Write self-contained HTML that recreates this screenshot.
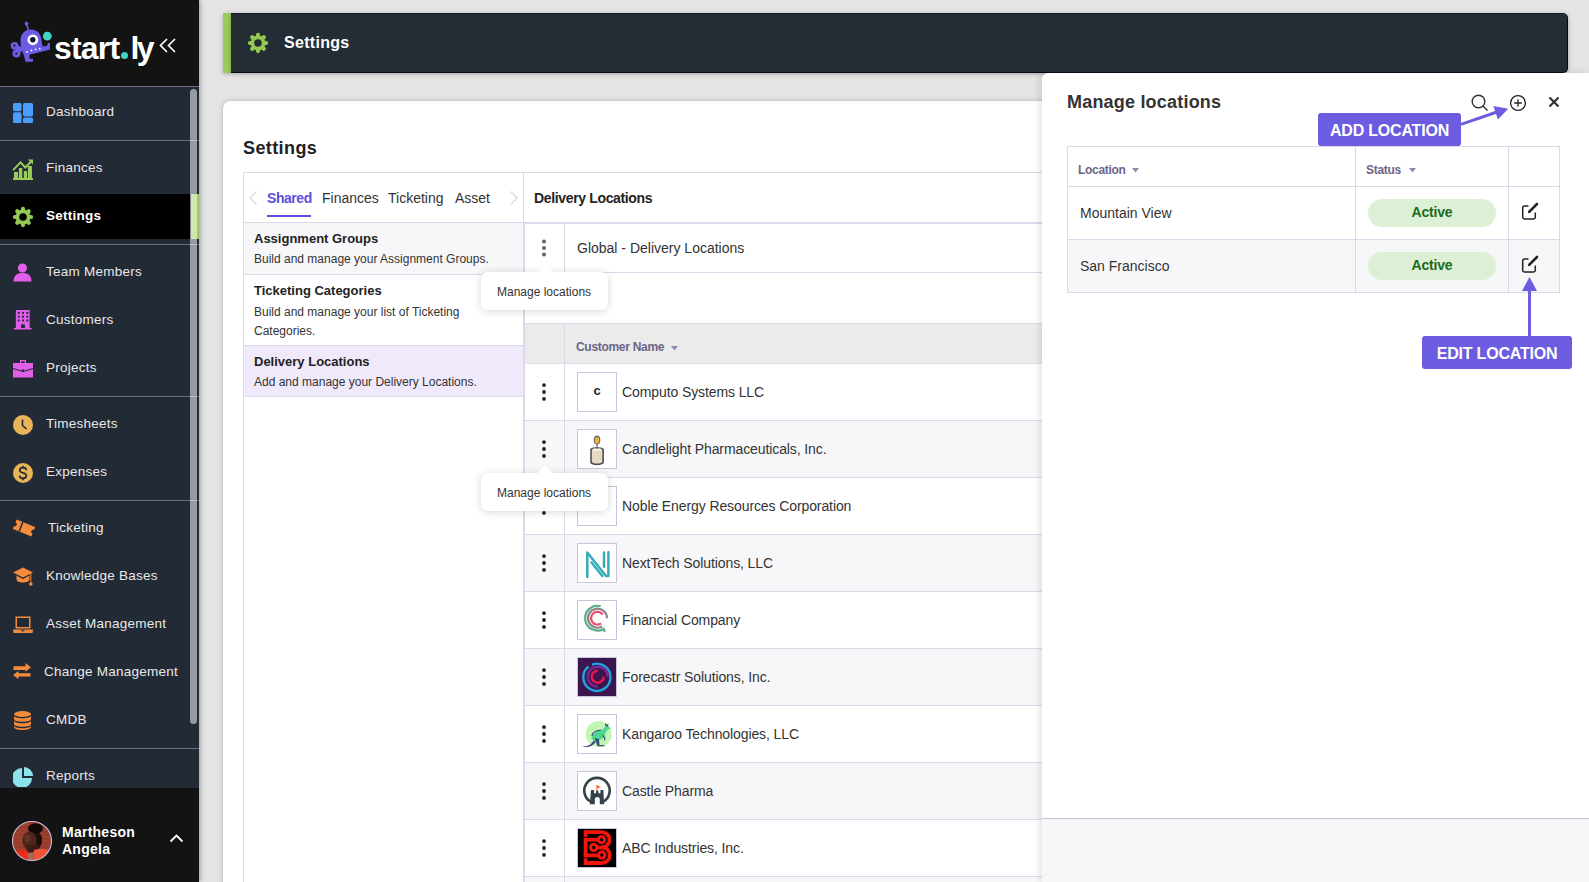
<!DOCTYPE html>
<html><head><meta charset="utf-8">
<style>
*{box-sizing:border-box;margin:0;padding:0}
html,body{width:1589px;height:882px;overflow:hidden;background:#e4e4e4;font-family:"Liberation Sans",sans-serif;color:#222}
.abs{position:absolute}
#sb{position:absolute;left:0;top:0;width:199px;height:882px;background:#222a36;box-shadow:1px 0 5px rgba(0,0,0,.35);z-index:5}
#sbtop{position:absolute;left:0;top:0;width:199px;height:86px;background:#131313}
.hl{position:absolute;left:0;width:199px;height:1px;background:#6f6a86}
.nav{position:absolute;left:46px;color:#e8e8ea;font-size:13.5px;letter-spacing:0.25px;white-space:nowrap}
.ic{position:absolute;left:13px;width:20px;height:20px}
#hgr{position:absolute;left:223px;top:13px;width:8px;height:60px;background:#9ccb5c;box-shadow:0 1px 4px rgba(0,0,0,.25)}
#hdr{position:absolute;left:231px;top:13px;width:1337px;height:60px;background:#232d33;border-bottom:1px solid #070a1a;border-top:1px solid #1a2030;border-right:1px solid #070a1a;border-radius:0 5px 5px 0;box-shadow:0 1px 4px rgba(0,0,0,.3)}
#card{position:absolute;left:223px;top:101px;width:1345px;height:800px;background:#fff;border-radius:8px;box-shadow:0 0 5px rgba(0,0,0,.22)}
.t{position:absolute;white-space:nowrap}
</style></head><body>

<!-- SIDEBAR -->
<div id="sb">
  <div id="sbtop"></div>
  <!-- logo -->
  <svg class="abs" style="left:8px;top:18px" width="50" height="48" viewBox="0 0 50 48">
    <path d="M18.5 6 L20.4 12" stroke="#6b5ce7" stroke-width="1.6"/>
    <circle cx="18.5" cy="5.7" r="1.9" fill="#6b5ce7"/>
    <circle cx="6.6" cy="27.8" r="3.9" fill="#6b5ce7"/><circle cx="8.5" cy="35.4" r="4" fill="#6b5ce7"/>
    <path d="M7 26 L14 29.5 L14 33 L9 37 Z" fill="#6b5ce7"/>
    <circle cx="6.4" cy="27.6" r="1.1" fill="#131313"/><circle cx="8.3" cy="35.6" r="1.1" fill="#131313"/>
    <path d="M12.5 23 C12.5 15.5 17 11.4 23 11.4 C29 11.4 33 15.5 33.5 22 L34.5 28.5 L39 27.8 L40 25 L42 25 L42 31.6 L21.5 36.8 L21.5 40.8 L25 40.8 L25 43.8 L17.5 43.8 L16 37.5 C14 34 12.5 29 12.5 23 Z" fill="#6b5ce7"/>
    <circle cx="24.8" cy="21.8" r="5.4" fill="#fff"/><circle cx="24.8" cy="21.8" r="2.7" fill="#0d1330"/>
    <circle cx="19" cy="34" r="0.9" fill="#fff"/><circle cx="23.5" cy="32.5" r="0.9" fill="#fff"/><circle cx="27.6" cy="31.4" r="0.9" fill="#fff"/><circle cx="31.7" cy="30.7" r="0.9" fill="#fff"/>
    <circle cx="39.3" cy="18.2" r="4.35" fill="#3dd6c4"/>
  </svg>
  <div class="t" style="left:54px;top:30px;font-size:32px;font-weight:bold;color:#fff;letter-spacing:-0.8px;line-height:36px">start<span style="display:inline-block;width:7px;height:7px;border-radius:50%;background:#3dd6c4;margin:0 2px 0 2px"></span><span style="letter-spacing:-2.6px">l</span>y</div>
  <svg class="abs" style="left:159px;top:38px" width="18" height="16" viewBox="0 0 18 16">
    <path d="M8 1 L1.5 7.5 L8 14 M16 1 L9.5 7.5 L16 14" fill="none" stroke="#fff" stroke-width="1.7"/>
  </svg>

  <div class="hl" style="top:86px"></div>
  <div class="hl" style="top:140px"></div>
  <div class="abs" style="left:0;top:194px;width:199px;height:45px;background:#000"></div>
  <div class="hl" style="top:244px"></div>
  <div class="hl" style="top:396px"></div>
  <div class="hl" style="top:500px"></div>
  <div class="hl" style="top:748px"></div>

  <!-- icons -->
  <svg class="ic" style="top:103px" viewBox="0 0 20 20" fill="#4a9eff">
    <rect x="0" y="0" width="8.6" height="8.2" rx="1.6"/><rect x="0" y="9.2" width="8.6" height="10.8" rx="1.6"/>
    <rect x="10" y="0" width="10" height="13.4" rx="1.6"/><rect x="10" y="14.4" width="10" height="5.6" rx="1.6"/>
  </svg>
  <svg class="abs" style="left:10px;top:155px" width="26" height="29" viewBox="0 0 26 29" fill="#9bcb58">
    <path d="M3.1 15.1 L10.5 7.4 L15.3 12.5 L21.5 6.3" fill="none" stroke="#9bcb58" stroke-width="2"/>
    <path d="M17.8 4.4 H23 V9.6 Z"/>
    <rect x="3.9" y="16.9" width="4.1" height="7"/><rect x="8.9" y="13" width="3.4" height="11"/><rect x="13.8" y="16" width="3.3" height="8"/><rect x="17.9" y="11" width="4" height="13"/>
    <rect x="3" y="23" width="20" height="2"/>
  </svg>
  <svg class="abs" style="left:11px;top:205px" width="24" height="24" viewBox="0 0 24 24">
    <g stroke="#94c853" stroke-width="4.2" stroke-linecap="round"><path d="M12 3.9 V20.1 M3.9 12 H20.1 M6.27 6.27 L17.73 17.73 M17.73 6.27 L6.27 17.73"/></g>
    <circle cx="12" cy="12" r="7.4" fill="#94c853"/><circle cx="12" cy="12" r="3.8" fill="#000"/>
  </svg>
  <svg class="ic" style="top:263px" viewBox="0 0 20 20" fill="#e05ee8">
    <circle cx="9.5" cy="5" r="4.6"/><path d="M0.5 18.5 C0.5 12.5 4 10 9.5 10 C15 10 18.5 12.5 18.5 18.5 Z"/>
  </svg>
  <svg class="ic" style="top:310px" viewBox="0 0 20 21" fill="#e05ee8">
    <path d="M2.5 0 H17 V19 H19 V20.5 H0.5 V19 H2.5 Z"/>
    <g fill="#222a36"><rect x="4.5" y="2" width="2" height="2"/><rect x="9" y="2" width="2" height="2"/><rect x="13.5" y="2" width="2" height="2"/>
    <rect x="4.5" y="6" width="2" height="2"/><rect x="9" y="6" width="2" height="2"/><rect x="13.5" y="6" width="2" height="2"/>
    <rect x="4.5" y="10" width="2" height="2"/><rect x="9" y="10" width="2" height="2"/><rect x="13.5" y="10" width="2" height="2"/>
    <path d="M8 19 V16 C8 14.5 12 14.5 12 16 V19 Z"/></g>
  </svg>
  <svg class="ic" style="top:359px" viewBox="0 0 20 18" fill="#e05ee8">
    <path d="M7 0 H13 V3 H20 V17.5 H0 V3 H7 Z M8.3 1.3 V3 H11.7 V1.3 Z" fill-rule="evenodd"/>
    <path d="M0 8.5 L8 11 M12 11 L20 8.5" stroke="#222a36" stroke-width="1" fill="none"/>
    <rect x="8.5" y="9.5" width="3" height="2.5" fill="#222a36"/>
  </svg>
  <svg class="ic" style="top:415px" viewBox="0 0 20 20">
    <circle cx="10" cy="10" r="10" fill="#e9b558"/><path d="M9.5 4.5 V10.5 L13.5 14" fill="none" stroke="#222a36" stroke-width="1.6"/>
  </svg>
  <svg class="ic" style="top:463px" viewBox="0 0 20 20">
    <circle cx="10" cy="10" r="10" fill="#e9b558"/>
    <path d="M13.3 7.2 C13.3 5.5 11.8 4.6 10 4.6 C8 4.6 6.7 5.6 6.7 7.2 C6.7 9 8.5 9.5 10 9.9 C11.7 10.3 13.4 10.9 13.4 12.8 C13.4 14.5 11.9 15.4 10 15.4 C8 15.4 6.5 14.4 6.5 12.6 M10 2.8 V4.6 M10 15.4 V17.2" fill="none" stroke="#222a36" stroke-width="1.6"/>
  </svg>
  <svg class="ic" style="top:518px;left:13px;width:22px;height:20px" viewBox="0 0 22 20" fill="#f28b3c">
    <g transform="rotate(22 11 10)"><path d="M1 5 H21 V8 A2 2 0 0 0 21 12 V15 H1 V12 A2 2 0 0 0 1 8 Z"/><rect x="7" y="5" width="1.4" height="10" fill="#222a36"/></g>
  </svg>
  <svg class="ic" style="top:567px" viewBox="0 0 20 20" fill="#f28b3c">
    <path d="M10 0.5 L20 5.5 L10 10.5 L0 5.5 Z"/><path d="M3.5 8.5 V12 C3.5 14.5 6.5 15.5 10 15.5 C13.5 15.5 16.5 14.5 16.5 12 V8.5 L10 12 Z"/>
    <rect x="17.3" y="5.5" width="1" height="10"/><circle cx="17.8" cy="17" r="1.8"/>
  </svg>
  <svg class="ic" style="top:615px" viewBox="0 0 20 17" fill="#f28b3c">
    <path d="M2.5 0 H17.5 V12 H2.5 Z M4 1.5 V10.5 H16 V1.5 Z" fill-rule="evenodd"/><path d="M0 13 H20 L19.5 16.5 H0.5 Z"/><rect x="8.5" y="13.6" width="3" height="1.2" fill="#222a36"/>
  </svg>
  <svg class="ic" style="top:663px;width:18px;height:16px" viewBox="0 0 18 16" fill="#f28b3c">
    <path d="M0.5 3.2 H12.5 V0 L18 4.35 L12.5 8.7 V7 H0.5 Z"/><path d="M17.5 10.3 H5.5 V7.9 L0 12.05 L5.5 16.2 V13.5 H17.5 Z"/>
  </svg>
  <svg class="ic" style="top:711px;left:14px;width:17px;height:19px" viewBox="0 0 17 19" fill="#f28b3c">
    <ellipse cx="8.5" cy="3" rx="8.5" ry="3"/>
    <path d="M0 4.5 C0 6.2 3.8 7.3 8.5 7.3 C13.2 7.3 17 6.2 17 4.5 V8 C17 9.7 13.2 10.8 8.5 10.8 C3.8 10.8 0 9.7 0 8 Z"/>
    <path d="M0 9.5 C0 11.2 3.8 12.3 8.5 12.3 C13.2 12.3 17 11.2 17 9.5 V13 C17 14.7 13.2 15.8 8.5 15.8 C3.8 15.8 0 14.7 0 13 Z"/>
    <path d="M0 14.5 C0 16.2 3.8 17.3 8.5 17.3 C13.2 17.3 17 16.2 17 14.5 V16 C17 17.7 13.2 19 8.5 19 C3.8 19 0 17.7 0 16 Z"/>
  </svg>
  <svg class="ic" style="top:767px" viewBox="0 0 20 20" fill="#8de3ec">
    <path d="M9 1 V11 H19 A10 10 0 1 1 9 1 Z"/><path d="M11 0 A9 9 0 0 1 20 9 H11 Z"/>
  </svg>

  <div class="nav" style="top:104px">Dashboard</div>
  <div class="nav" style="top:160px">Finances</div>
  <div class="nav" style="top:208px;font-weight:bold;color:#fff">Settings</div>
  <div class="nav" style="top:264px">Team Members</div>
  <div class="nav" style="top:312px">Customers</div>
  <div class="nav" style="top:360px">Projects</div>
  <div class="nav" style="top:416px">Timesheets</div>
  <div class="nav" style="top:464px">Expenses</div>
  <div class="nav" style="top:520px;left:48px">Ticketing</div>
  <div class="nav" style="top:568px">Knowledge Bases</div>
  <div class="nav" style="top:616px">Asset Management</div>
  <div class="nav" style="top:664px;left:44px">Change Management</div>
  <div class="nav" style="top:712px">CMDB</div>
  <div class="nav" style="top:768px">Reports</div>

  <div class="abs" style="left:0;top:788px;width:199px;height:94px;background:#131313"></div>

  <!-- scrollbar -->
  <div class="abs" style="left:191px;top:194px;width:8px;height:45px;background:#9ccc5a"></div>
  <div class="abs" style="left:190px;top:89px;width:7px;height:635px;background:rgba(255,255,255,.53);border-radius:4px"></div>

  <!-- user -->
  <svg class="abs" style="left:12px;top:821px" width="40" height="40" viewBox="0 0 40 40">
    <defs><clipPath id="av"><circle cx="20" cy="20" r="19.5"/></clipPath></defs>
    <g clip-path="url(#av)">
      <rect width="40" height="40" fill="#973b2b"/>
      <g stroke="#ab4a37" stroke-width="0.7"><path d="M0 4 H40 M0 8 H40 M0 12 H40 M0 16 H40 M0 20 H40 M0 24 H40 M0 28 H40"/></g>
      <path d="M17 11 C22 9 29 11 30 17 C30.5 23 28 27 24 29 L16 28 Z" fill="#1c0d0a"/>
      <ellipse cx="23.5" cy="7.5" rx="7.5" ry="5.2" fill="#130908"/>
      <ellipse cx="17.5" cy="19.5" rx="7.2" ry="9" fill="#4d261b"/>
      <ellipse cx="15.5" cy="17.5" rx="3" ry="4" fill="#6e3a2a" opacity=".7"/>
      <path d="M14 25 L26 23 L27 34 L15 34 Z" fill="#3a1a12"/>
      <path d="M1 31 C6 29 12 29 16 30 L17 40 H0 Z" fill="#ee2a18"/>
      <path d="M22 29 C28 27 34 28 40 30 V40 H21 Z" fill="#ee5535"/>
      <path d="M15.5 32 L22 31 L20.5 40 L16.5 40 Z" fill="#a56a5a"/>
    </g>
    <circle cx="20" cy="20" r="19.5" fill="none" stroke="#c3bdd8" stroke-width="1.1"/>
  </svg>
  <div class="t" style="left:62px;top:824px;color:#fff;font-weight:bold;font-size:14px;line-height:17px;letter-spacing:0.25px">Martheson<br>Angela</div>
  <svg class="abs" style="left:169px;top:833px" width="15" height="10" viewBox="0 0 15 10">
    <path d="M1.5 8.5 L7.5 2.5 L13.5 8.5" fill="none" stroke="#fff" stroke-width="1.8"/>
  </svg>
</div>

<!-- HEADER -->
<div id="hgr"></div>
<div id="hdr">
  <svg class="abs" style="left:15px;top:17px" width="24" height="24" viewBox="0 0 24 24">
    <g stroke="#94c853" stroke-width="4.2" stroke-linecap="round"><path d="M12 3.9 V20.1 M3.9 12 H20.1 M6.27 6.27 L17.73 17.73 M17.73 6.27 L6.27 17.73"/></g>
    <circle cx="12" cy="12" r="7.4" fill="#94c853"/><circle cx="12" cy="12" r="3.8" fill="#232c33"/>
  </svg>
  <div class="t" style="left:53px;top:20px;color:#fff;font-weight:bold;font-size:16px;letter-spacing:0.3px">Settings</div>
</div>

<!-- CARD -->
<div id="card">
  <div class="t" style="left:20px;top:37px;font-size:18px;font-weight:bold;color:#222;letter-spacing:0.4px">Settings</div>
</div>

<!-- LEFT LIST PANEL -->
<div class="abs" style="left:243px;top:172px;width:281px;height:720px;border:1px solid #dcd9ea;border-bottom:none"></div>
<div class="abs" style="left:244px;top:222px;width:279px;height:1px;background:#dcd9ea"></div>
<svg class="abs" style="left:248px;top:190px" width="10" height="16" viewBox="0 0 10 16"><path d="M8.5 1.5 L2 8 L8.5 14.5" fill="none" stroke="#dcd9ec" stroke-width="1.4"/></svg>
<svg class="abs" style="left:509px;top:190px" width="10" height="16" viewBox="0 0 10 16"><path d="M1.5 1.5 L8 8 L1.5 14.5" fill="none" stroke="#dcd9ec" stroke-width="1.4"/></svg>
<div class="t" style="left:267px;top:190px;font-size:14px;font-weight:bold;color:#5b50dc;letter-spacing:-0.45px">Shared</div>
<div class="abs" style="left:267px;top:215px;width:44px;height:2px;background:#5b4fe0"></div>
<div class="t" style="left:322px;top:190px;font-size:14px;color:#333">Finances</div>
<div class="t" style="left:388px;top:190px;font-size:14px;color:#333">Ticketing</div>
<div class="t" style="left:455px;top:190px;font-size:14px;color:#333">Asset</div>

<div class="abs" style="left:244px;top:223px;width:279px;height:52px;background:#f7f7fa;border-bottom:1px solid #dcd9ea"></div>
<div class="t" style="left:254px;top:231px;font-size:13px;font-weight:bold;color:#222">Assignment Groups</div>
<div class="t" style="left:254px;top:252px;font-size:12px;color:#333">Build and manage your Assignment Groups.</div>

<div class="abs" style="left:244px;top:275px;width:279px;height:71px;background:#fff;border-bottom:1px solid #dcd9ea"></div>
<div class="t" style="left:254px;top:283px;font-size:13px;font-weight:bold;color:#222">Ticketing Categories</div>
<div class="t" style="left:254px;top:303px;font-size:12px;color:#333;line-height:19px">Build and manage your list of Ticketing<br>Categories.</div>

<div class="abs" style="left:244px;top:346px;width:279px;height:51px;background:#f0e9fb;border-bottom:1px solid #dcd9ea"></div>
<div class="t" style="left:254px;top:354px;font-size:13px;font-weight:bold;color:#222">Delivery Locations</div>
<div class="t" style="left:254px;top:375px;font-size:12px;color:#333">Add and manage your Delivery Locations.</div>

<!-- RIGHT CONTENT -->
<div class="abs" style="left:524px;top:172px;width:530px;height:1px;background:#dcd9ea"></div>
<div class="t" style="left:534px;top:190px;font-size:14px;font-weight:bold;color:#222;letter-spacing:-0.35px">Delivery Locations</div>
<div class="abs" style="left:524px;top:222px;width:530px;height:2px;background:#dcd9ea"></div>

<!-- global row -->
<div class="abs" style="left:564px;top:223px;width:1px;height:49px;background:#dcd9ea"></div>
<div class="abs" style="left:524px;top:272px;width:530px;height:1px;background:#dcd9ea"></div>
<div class="t" style="left:577px;top:240px;font-size:14px;color:#333">Global - Delivery Locations</div>

<!-- table -->
<div id="tbl">
<div class="abs" style="left:525px;top:323px;width:530px;height:41px;background:#ebebeb;border-bottom:1px solid #e0ddec;border-top:1px solid #dcd9ea"></div>
<div class="abs" style="left:564px;top:323px;width:1px;height:600px;background:#dcd9ea"></div>
<div class="abs" style="left:523px;top:222px;width:2px;height:700px;background:#dcd9ea"></div>
<div class="t" style="left:576px;top:340px;font-size:12px;font-weight:bold;color:#6b6589;letter-spacing:-0.3px">Customer Name</div>
<svg class="abs" style="left:671px;top:346px" width="7" height="5" viewBox="0 0 7 5"><path d="M0 0 H7 L3.5 4.5 Z" fill="#8e8aab"/></svg>
<div class="abs" style="left:525px;top:364px;width:529px;height:57px;background:#fff;border-bottom:1px solid #dcd9ea"></div>
<div class="abs" style="left:564px;top:363px;width:1px;height:57px;background:#dcd9ea"></div>
<svg class="abs" style="left:541px;top:383px" width="6" height="18" viewBox="0 0 6 18" fill="#222"><circle cx="3" cy="2.1" r="1.9"/><circle cx="3" cy="9" r="1.9"/><circle cx="3" cy="15.9" r="1.9"/></svg>
<div class="abs" style="left:577px;top:372px;width:40px;height:40px;border:1px solid #c9c5dd;background:#fff"><div class="t" style="left:0;top:-1px;width:38px;text-align:center;line-height:38px;font-size:13px;font-weight:bold;color:#222">c</div></div>
<div class="t" style="left:622px;top:384px;font-size:14px;color:#333;letter-spacing:-0.1px">Computo Systems LLC</div>
<div class="abs" style="left:525px;top:421px;width:529px;height:57px;background:#f7f7fa;border-bottom:1px solid #dcd9ea"></div>
<div class="abs" style="left:564px;top:420px;width:1px;height:57px;background:#dcd9ea"></div>
<svg class="abs" style="left:541px;top:440px" width="6" height="18" viewBox="0 0 6 18" fill="#222"><circle cx="3" cy="2.1" r="1.9"/><circle cx="3" cy="9" r="1.9"/><circle cx="3" cy="15.9" r="1.9"/></svg>
<div class="abs" style="left:577px;top:429px;width:40px;height:40px;border:1px solid #c9c5dd;background:#fff"><svg class="abs" style="left:0;top:0" width="38" height="38" viewBox="0 0 38 38">
<ellipse cx="19" cy="10" rx="3.3" ry="4.5" fill="#6a6a6a"/><ellipse cx="19" cy="10.4" rx="2.2" ry="3.3" fill="#e8b53a"/>
<path d="M12.2 19.5 C12.2 16.5 25.9 16.5 25.9 19.5 V32 C25.9 36.2 12.2 36.2 12.2 32 Z" fill="#4a4f4f"/>
<path d="M13.8 20 C13.8 18.3 24.3 18.3 24.3 20 V31.5 C24.3 34.3 13.8 34.3 13.8 31.5 Z" fill="#e6dac4"/>
<ellipse cx="19" cy="19.6" rx="4.6" ry="1.4" fill="#f5f0e6"/><rect x="18.6" y="14" width="0.9" height="5" fill="#444"/>
</svg></div>
<div class="t" style="left:622px;top:441px;font-size:14px;color:#333;letter-spacing:-0.1px">Candlelight Pharmaceuticals, Inc.</div>
<div class="abs" style="left:525px;top:478px;width:529px;height:57px;background:#fff;border-bottom:1px solid #dcd9ea"></div>
<div class="abs" style="left:564px;top:477px;width:1px;height:57px;background:#dcd9ea"></div>
<svg class="abs" style="left:541px;top:497px" width="6" height="18" viewBox="0 0 6 18" fill="#222"><circle cx="3" cy="2.1" r="1.9"/><circle cx="3" cy="9" r="1.9"/><circle cx="3" cy="15.9" r="1.9"/></svg>
<div class="abs" style="left:577px;top:486px;width:40px;height:40px;border:1px solid #c9c5dd;background:#fff"></div>
<div class="t" style="left:622px;top:498px;font-size:14px;color:#333;letter-spacing:-0.1px">Noble Energy Resources Corporation</div>
<div class="abs" style="left:525px;top:535px;width:529px;height:57px;background:#f7f7fa;border-bottom:1px solid #dcd9ea"></div>
<div class="abs" style="left:564px;top:534px;width:1px;height:57px;background:#dcd9ea"></div>
<svg class="abs" style="left:541px;top:554px" width="6" height="18" viewBox="0 0 6 18" fill="#222"><circle cx="3" cy="2.1" r="1.9"/><circle cx="3" cy="9" r="1.9"/><circle cx="3" cy="15.9" r="1.9"/></svg>
<div class="abs" style="left:577px;top:543px;width:40px;height:40px;border:1px solid #c9c5dd;background:#fff"><svg class="abs" style="left:0;top:0" width="38" height="38" viewBox="0 0 38 38" fill="none" stroke="#35adb9" stroke-width="2.5" stroke-linecap="round" stroke-linejoin="round">
<path d="M9.3 33 V8.5 L28 32 H30.4 V8.2"/><path d="M13.5 18.5 L24.3 32"/><path d="M26 8.5 V22.8"/>
</svg></div>
<div class="t" style="left:622px;top:555px;font-size:14px;color:#333;letter-spacing:-0.1px">NextTech Solutions, LLC</div>
<div class="abs" style="left:525px;top:592px;width:529px;height:57px;background:#fff;border-bottom:1px solid #dcd9ea"></div>
<div class="abs" style="left:564px;top:591px;width:1px;height:57px;background:#dcd9ea"></div>
<svg class="abs" style="left:541px;top:611px" width="6" height="18" viewBox="0 0 6 18" fill="#222"><circle cx="3" cy="2.1" r="1.9"/><circle cx="3" cy="9" r="1.9"/><circle cx="3" cy="15.9" r="1.9"/></svg>
<div class="abs" style="left:577px;top:600px;width:40px;height:40px;border:1px solid #c9c5dd;background:#fff"><svg class="abs" style="left:0;top:0" width="38" height="38" viewBox="0 0 38 38" fill="none" stroke-width="2.2">
<path d="M22.71 5.22 A12.4 12.4 0 1 0 25.70 27.94 L26.8 31" stroke="#5aad8a"/>
<path d="M29.00 17.20 A9.5 9.5 0 1 0 24.25 25.43" stroke="#8a8686"/>
<path d="M24.74 13.53 A6.4 6.4 0 1 0 23.17 22.44" stroke="#ec4d6d"/>
</svg></div>
<div class="t" style="left:622px;top:612px;font-size:14px;color:#333;letter-spacing:-0.1px">Financial Company</div>
<div class="abs" style="left:525px;top:649px;width:529px;height:57px;background:#f7f7fa;border-bottom:1px solid #dcd9ea"></div>
<div class="abs" style="left:564px;top:648px;width:1px;height:57px;background:#dcd9ea"></div>
<svg class="abs" style="left:541px;top:668px" width="6" height="18" viewBox="0 0 6 18" fill="#222"><circle cx="3" cy="2.1" r="1.9"/><circle cx="3" cy="9" r="1.9"/><circle cx="3" cy="15.9" r="1.9"/></svg>
<div class="abs" style="left:577px;top:657px;width:40px;height:40px;border:1px solid #c9c5dd;background:#fff"><svg class="abs" style="left:0;top:0" width="38" height="38" viewBox="1 1 38 38" fill="none">
<rect width="40" height="40" fill="#3d154f"/>
<path d="M15 7.6 A13.6 13.6 0 1 1 11.6 9.5" stroke="#1ba6de" stroke-width="2.4"/>
<path d="M20.7 29.7 A10 10 0 1 1 30.7 19.7" stroke="#7b2690" stroke-width="2.4"/>
<path d="M26.7 19.7 A6 6 0 1 1 20.7 13.7" stroke="#e8194a" stroke-width="2.4"/>
</svg></div>
<div class="t" style="left:622px;top:669px;font-size:14px;color:#333;letter-spacing:-0.1px">Forecastr Solutions, Inc.</div>
<div class="abs" style="left:525px;top:706px;width:529px;height:57px;background:#fff;border-bottom:1px solid #dcd9ea"></div>
<div class="abs" style="left:564px;top:705px;width:1px;height:57px;background:#dcd9ea"></div>
<svg class="abs" style="left:541px;top:725px" width="6" height="18" viewBox="0 0 6 18" fill="#222"><circle cx="3" cy="2.1" r="1.9"/><circle cx="3" cy="9" r="1.9"/><circle cx="3" cy="15.9" r="1.9"/></svg>
<div class="abs" style="left:577px;top:714px;width:40px;height:40px;border:1px solid #c9c5dd;background:#fff"><svg class="abs" style="left:-1px;top:-1px" width="40" height="40" viewBox="0 0 40 40">
<circle cx="21.7" cy="20" r="13" fill="#c2f7b2"/>
<path d="M5 32.7 C10 32.5 14.5 31 16.5 26.5 L18.8 27.5 C16.5 32 11 34 5 32.7 Z" fill="#3c4e78"/>
<ellipse cx="21.5" cy="21.5" rx="7.5" ry="4.6" transform="rotate(-28 21.5 21.5)" fill="#4fd68f"/>
<path d="M15 22 C15 18 19 16.5 24 16" stroke="#3c4e78" stroke-width="1.2" fill="none"/>
<path d="M17.5 24 L20.5 32.2 H27.5 V31 H22.5 L22 25 Z" fill="#3c4e78"/>
<path d="M24 17 L28.5 12.5 L31 12 L34 15 L31 15.2 L28 19.5 Z" fill="#4fd68f"/>
<path d="M28.5 12.5 L28 8.8 L30 11 L31.5 9 L31 12.3 Z" fill="#3c4e78"/>
<path d="M26 21 L28.5 23.5 L28 26.5 L26.8 26 L27.2 23.8 L25 22 Z" fill="#3c4e78"/>
</svg></div>
<div class="t" style="left:622px;top:726px;font-size:14px;color:#333;letter-spacing:-0.1px">Kangaroo Technologies, LLC</div>
<div class="abs" style="left:525px;top:763px;width:529px;height:57px;background:#f7f7fa;border-bottom:1px solid #dcd9ea"></div>
<div class="abs" style="left:564px;top:762px;width:1px;height:57px;background:#dcd9ea"></div>
<svg class="abs" style="left:541px;top:782px" width="6" height="18" viewBox="0 0 6 18" fill="#222"><circle cx="3" cy="2.1" r="1.9"/><circle cx="3" cy="9" r="1.9"/><circle cx="3" cy="15.9" r="1.9"/></svg>
<div class="abs" style="left:577px;top:771px;width:40px;height:40px;border:1px solid #c9c5dd;background:#fff"><svg class="abs" style="left:-1px;top:-1px" width="40" height="40" viewBox="0 0 40 40">
<path d="M13.5 30.5 A12.7 12.7 0 1 1 26.5 30.5" fill="none" stroke="#34434a" stroke-width="2.6"/>
<path d="M12.8 33.3 L14 19 H17.1 V22.3 H19 V19.5 H21.4 V22.3 H23.5 V19 H26.4 L27.1 33.3 H22.8 V28.5 A2.5 2.5 0 0 0 17.8 28.5 V33.3 Z" fill="#34434a"/>
<rect x="19.4" y="14" width="0.9" height="6" fill="#f26b2d"/><path d="M19.8 14.2 L23.8 15.8 L19.8 18 Z" fill="#f26b2d"/>
</svg></div>
<div class="t" style="left:622px;top:783px;font-size:14px;color:#333;letter-spacing:-0.1px">Castle Pharma</div>
<div class="abs" style="left:525px;top:820px;width:529px;height:57px;background:#fff;border-bottom:1px solid #dcd9ea"></div>
<div class="abs" style="left:564px;top:819px;width:1px;height:57px;background:#dcd9ea"></div>
<svg class="abs" style="left:541px;top:839px" width="6" height="18" viewBox="0 0 6 18" fill="#222"><circle cx="3" cy="2.1" r="1.9"/><circle cx="3" cy="9" r="1.9"/><circle cx="3" cy="15.9" r="1.9"/></svg>
<div class="abs" style="left:577px;top:828px;width:40px;height:40px;border:1px solid #c9c5dd;background:#fff"><svg class="abs" style="left:0;top:0" width="38" height="38" viewBox="1 1 38 38" fill="none">
<rect width="40" height="40" fill="#000"/>
<g stroke="#f5140c">
<path d="M8.6 8.8 V4.2 H25 A7.55 7.55 0 0 1 25 19.3 A7.85 7.85 0 0 1 25 35 H8.6 V30.3" stroke-width="3.8"/>
<circle cx="24.5" cy="11.7" r="3.2" stroke-width="3.1"/><circle cx="16.7" cy="19.5" r="3.2" stroke-width="3.1"/><circle cx="24.8" cy="27.1" r="3.2" stroke-width="3.1"/>
</g>
<g fill="#f5140c"><rect x="6.7" y="9.8" width="3.8" height="19.5"/><rect x="6.7" y="9.8" width="14" height="3.8"/><rect x="6.7" y="25.5" width="14.5" height="3.8"/><rect x="19.5" y="17.6" width="11" height="3.8"/></g>
</svg></div>
<div class="t" style="left:622px;top:840px;font-size:14px;color:#333;letter-spacing:-0.1px">ABC Industries, Inc.</div>
<div class="abs" style="left:525px;top:877px;width:529px;height:57px;background:#f7f7fa;border-bottom:1px solid #dcd9ea"></div>
<div class="abs" style="left:564px;top:876px;width:1px;height:57px;background:#dcd9ea"></div>
<svg class="abs" style="left:541px;top:896px" width="6" height="18" viewBox="0 0 6 18" fill="#222"><circle cx="3" cy="2.1" r="1.9"/><circle cx="3" cy="9" r="1.9"/><circle cx="3" cy="15.9" r="1.9"/></svg>
</div><!--/tbl-->

<!-- KEBAB global -->
<svg class="abs" style="left:541px;top:239px" width="6" height="18" viewBox="0 0 6 18" fill="#666"><circle cx="3" cy="2.5" r="2"/><circle cx="3" cy="9" r="2"/><circle cx="3" cy="15.5" r="2"/></svg>

<!-- TOOLTIPS -->
<div class="abs" style="left:481px;top:272px;width:127px;height:38px;background:#fff;border-radius:7px;box-shadow:0 1px 8px rgba(0,0,0,.16)">
  <div class="t" style="left:16px;top:13px;font-size:12px;color:#333">Manage locations</div>
</div>
<svg class="abs" style="left:535px;top:264px" width="20" height="9" viewBox="0 0 20 9"><path d="M1.5 9 L10 0.5 L18.5 9 Z" fill="#fff"/></svg>
<div class="abs" style="left:481px;top:473px;width:127px;height:38px;background:#fff;border-radius:7px;box-shadow:0 1px 8px rgba(0,0,0,.16)">
  <div class="t" style="left:16px;top:13px;font-size:12px;color:#333">Manage locations</div>
</div>
<svg class="abs" style="left:535px;top:465px" width="20" height="9" viewBox="0 0 20 9"><path d="M1.5 9 L10 0.5 L18.5 9 Z" fill="#fff"/></svg>

<!-- PANEL -->
<div id="panel" class="abs" style="left:1042px;top:73px;width:547px;height:809px;background:#fff;border-top-left-radius:6px;box-shadow:-2px 0 9px rgba(0,0,0,.12)">
  <div class="t" style="left:25px;top:19px;font-size:18px;font-weight:bold;color:#333;letter-spacing:0.2px">Manage locations</div>
  <!-- search -->
  <svg class="abs" style="left:429px;top:21px" width="18" height="18" viewBox="0 0 18 18" fill="none" stroke="#333" stroke-width="1.4">
    <circle cx="7.5" cy="7.5" r="6.3"/><path d="M12 12 L16.5 16.5"/>
  </svg>
  <!-- plus -->
  <svg class="abs" style="left:467px;top:21px" width="18" height="18" viewBox="0 0 18 18" fill="none" stroke="#222" stroke-width="1.4">
    <circle cx="9" cy="9" r="7.4" stroke-width="1.3"/><path d="M9 5.2 V12.8 M5.2 9 H12.8" stroke-width="1.3"/>
  </svg>
  <!-- close -->
  <svg class="abs" style="left:506px;top:23px" width="12" height="12" viewBox="0 0 12 12" fill="none" stroke="#333" stroke-width="2.2">
    <path d="M1.5 1.5 L10.5 10.5 M10.5 1.5 L1.5 10.5"/>
  </svg>

  <!-- table -->
  <div class="abs" style="left:25px;top:73px;width:493px;height:147px;border:1px solid #dcd9ea"></div>
  <div class="abs" style="left:26px;top:113px;width:491px;height:53px;background:#fff;border-top:1px solid #dcd9ea"></div>
  <div class="abs" style="left:26px;top:166px;width:491px;height:53px;background:#f7f7fa;border-top:1px solid #dcd9ea"></div>
  <div class="abs" style="left:313px;top:74px;width:1px;height:145px;background:#dcd9ea"></div>
  <div class="abs" style="left:466px;top:74px;width:1px;height:145px;background:#dcd9ea"></div>
  <div class="t" style="left:36px;top:90px;font-size:12px;font-weight:bold;color:#6b6589;letter-spacing:-0.3px">Location</div>
  <svg class="abs" style="left:90px;top:95px" width="7" height="5" viewBox="0 0 7 5"><path d="M0 0 H7 L3.5 4.5 Z" fill="#8e8aab"/></svg>
  <div class="t" style="left:324px;top:90px;font-size:12px;font-weight:bold;color:#6b6589;letter-spacing:-0.3px">Status</div>
  <svg class="abs" style="left:367px;top:95px" width="7" height="5" viewBox="0 0 7 5"><path d="M0 0 H7 L3.5 4.5 Z" fill="#8e8aab"/></svg>

  <div class="t" style="left:38px;top:132px;font-size:14px;color:#333">Mountain View</div>
  <div class="t" style="left:38px;top:185px;font-size:14px;color:#333">San Francisco</div>
  <div class="abs" style="left:326px;top:126px;width:128px;height:28px;border-radius:14px;background:#dcf0d6;color:#1c6b1c;font-weight:bold;font-size:14px;text-align:center;line-height:26px;letter-spacing:-0.2px">Active</div>
  <div class="abs" style="left:326px;top:179px;width:128px;height:28px;border-radius:14px;background:#dcf0d6;color:#1c6b1c;font-weight:bold;font-size:14px;text-align:center;line-height:26px;letter-spacing:-0.2px">Active</div>
  <!-- edit icons -->
  <svg class="abs" style="left:479px;top:129px" width="20" height="20" viewBox="0 0 20 20" fill="none">
    <path d="M7.5 4.1 H3.4 A1.7 1.7 0 0 0 1.7 5.8 V15.2 A1.7 1.7 0 0 0 3.4 16.9 H12.6 A1.7 1.7 0 0 0 14.3 15.2 V10.5" stroke="#222" stroke-width="1.5"/>
    <path d="M8.6 9.4 L16 2" stroke="#222" stroke-width="2.6" stroke-linecap="round"/>
    <path d="M7 11.2 L7.6 8.4 L9.8 10.6 Z" fill="#222"/>
  </svg>
  <svg class="abs" style="left:479px;top:182px" width="20" height="20" viewBox="0 0 20 20" fill="none">
    <path d="M7.5 4.1 H3.4 A1.7 1.7 0 0 0 1.7 5.8 V15.2 A1.7 1.7 0 0 0 3.4 16.9 H12.6 A1.7 1.7 0 0 0 14.3 15.2 V10.5" stroke="#222" stroke-width="1.5"/>
    <path d="M8.6 9.4 L16 2" stroke="#222" stroke-width="2.6" stroke-linecap="round"/>
    <path d="M7 11.2 L7.6 8.4 L9.8 10.6 Z" fill="#222"/>
  </svg>

  <!-- footer -->
  <div class="abs" style="left:0;top:745px;width:547px;height:64px;background:#f7f7fa;border-top:1px solid #c5c2d9"></div>
</div>

<!-- ANNOTATIONS -->
<div class="abs" style="left:1318px;top:113px;width:143px;height:33px;background:#6c5ce0;border-radius:3px;color:#fff;font-weight:bold;font-size:16px;line-height:35px;text-align:center;letter-spacing:-0.2px">ADD LOCATION</div>
<svg class="abs" style="left:1455px;top:98px" width="60" height="32" viewBox="0 0 60 32">
  <path d="M6 26.3 L42 14" stroke="#6c5ce0" stroke-width="3"/>
  <path d="M53.2 10.8 L38.4 8.1 L42.9 21.4 Z" fill="#6c5ce0"/>
</svg>
<div class="abs" style="left:1422px;top:336px;width:150px;height:33px;background:#6c5ce0;border-radius:3px;color:#fff;font-weight:bold;font-size:16px;line-height:35px;text-align:center;letter-spacing:-0.2px">EDIT LOCATION</div>
<div class="abs" style="left:1528px;top:289px;width:3px;height:48px;background:#6c5ce0"></div>
<svg class="abs" style="left:1521px;top:277px" width="17" height="15" viewBox="0 0 17 15"><path d="M8.5 0 L16 14 H1 Z" fill="#6c5ce0"/></svg>

</body></html>
